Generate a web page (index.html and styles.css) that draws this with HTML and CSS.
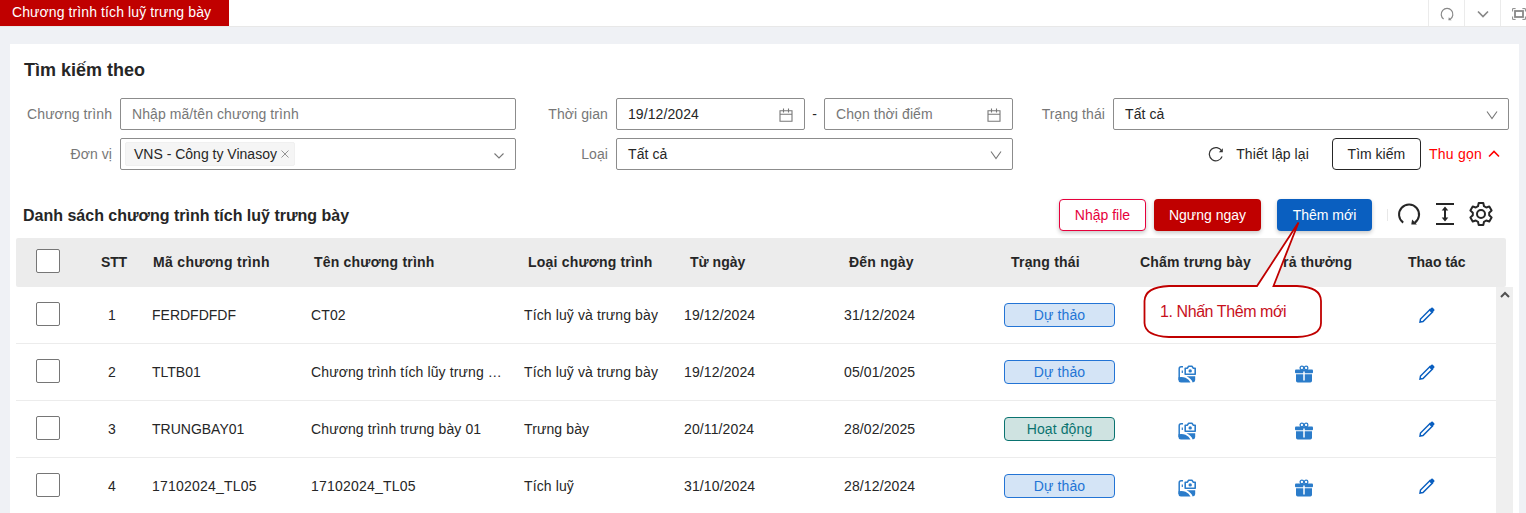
FILE: index.html
```html
<!DOCTYPE html>
<html lang="vi">
<head>
<meta charset="utf-8">
<title>Chương trình tích luỹ trưng bày</title>
<link rel="stylesheet" href="styles.css">
</head>
<body>
<svg class="defs" width="0" height="0">
  <symbol id="chev" viewBox="0 0 12 12"><path d="M1 2.500 6 9.500 11 2.500" fill="none" stroke="currentColor" stroke-width="1.100"/></symbol>
  <symbol id="cal" viewBox="0 0 14 14"><path d="M1 2.700h12v10.500H1zM1 6.200h12M4.500.5v4M9.500.5v4" fill="none" stroke="currentColor" stroke-width="1.100"/></symbol>
  <symbol id="loop" viewBox="0 0 24 24"><path d="M6.200 20.600A10 10 0 1 1 17.600 20.800" fill="none" stroke="currentColor" stroke-width="2"/><path d="M14.300 22.600l.8-5 4.800 5z" fill="currentColor"/></symbol>
  <symbol id="photo" viewBox="0 0 18 18"><path d="M5 1.800H3.200Q1.200 1.800 1.200 3.800V15" fill="none" stroke="currentColor" stroke-width="1.500"/><path d="M.5 12.300Q4.500 11.500 7.500 12.800q3.500 1.500 5 4.700H3q-2.500 0-2.500-2.500z" fill="currentColor"/><path d="M8.500 11.300h8.700v3.700q0 2.300-2.500 2.500-1.500-4-6.200-6.200z" fill="currentColor"/><path d="M7.200 3.200h2.200l1.100-1.900h3.600l1.100 1.900h2v6.100h-10z" fill="#fff" stroke="currentColor" stroke-width="1.600" stroke-linejoin="round"/><circle cx="12.200" cy="5.900" r="1.700" fill="currentColor"/><path d="M4.300 5.500V8" stroke="currentColor" stroke-width="1.200"/></symbol>
  <symbol id="gift" viewBox="0 0 18 18"><circle cx="6.900" cy="3" r="1.800" fill="none" stroke="currentColor" stroke-width="1.300"/><circle cx="11.100" cy="3" r="1.800" fill="none" stroke="currentColor" stroke-width="1.300"/><rect y="4.600" width="18" height="3.700" rx="1" fill="currentColor"/><path d="M1 9.300h16v6.400q0 1.700-1.700 1.700H2.700Q1 17.400 1 15.700z" fill="currentColor"/><path d="M9 6.500v9" stroke="#fff" stroke-width="1.500"/></symbol>
  <symbol id="pen" viewBox="0 0 16 16"><path d="M1 15l.5-3L11 2.500l2.500 2.500L4 14.500z" fill="none" stroke="currentColor" stroke-width="1.500"/><path d="M10 3.300l2.300-2.500q.8-.6 1.500 0l1.400 1.400q.7.800 0 1.600L12.700 6z" fill="currentColor"/></symbol>
</svg>

<header class="topbar">
  <div class="tab">Chương trình tích luỹ trưng bày</div>
  <div class="tools">
    <span><svg width="14" height="14"><use href="#loop"/></svg></span>
    <span><svg width="12" height="12" viewBox="0 0 12 12"><path d="M1 3.500 6 8.500l5-5" fill="none" stroke="currentColor" stroke-width="1.700"/></svg></span>
    <span><svg width="14" height="12" viewBox="0 0 14 12"><path d="M.6 3.500V.6h3M10.400.6h3v2.900M13.400 8.500v2.900h-3M3.600 11.400h-3V8.500" fill="none" stroke="currentColor"/><rect x="3" y="3" width="8" height="6" fill="none" stroke="currentColor" stroke-width="1.800"/></svg></span>
  </div>
</header>

<main class="card">
  <h1 class="title">Tìm kiếm theo</h1>
  <form class="filters">
    <label>Chương trình</label>
    <div class="field muted">Nhập mã/tên chương trình</div>
    <label>Thời gian</label>
    <div class="range">
      <div class="field">19/12/2024<svg class="cal" width="14" height="14"><use href="#cal"/></svg></div>
      <span class="dash">-</span>
      <div class="field muted">Chọn thời điểm<svg class="cal" width="14" height="14"><use href="#cal"/></svg></div>
    </div>
    <label>Trạng thái</label>
    <div class="field">Tất cả<svg class="chev" width="12" height="12"><use href="#chev"/></svg></div>
    <label>Đơn vị</label>
    <div class="field tags"><span class="tag">VNS - Công ty Vinasoy<svg width="8" height="8" viewBox="0 0 8 8"><path d="M.5.5l7 7m0-7l-7 7" stroke="#888" stroke-width=".9"/></svg></span><svg class="chev" width="12" height="12" viewBox="0 0 12 12"><path d="M1.500 4.500 6 9 10.500 4.500" fill="none" stroke="currentColor" stroke-width="1.100"/></svg></div>
    <label>Loại</label>
    <div class="field">Tất cả<svg class="chev" width="12" height="12"><use href="#chev"/></svg></div>
    <div class="actions">
      <span class="reset"><svg width="16" height="16" viewBox="0 0 16 16"><path d="M14.100 10.500A6.600 6.600 0 1 1 13.700 5" fill="none" stroke="#333" stroke-width="1.200"/><path d="M14.800 2.300v4h-4z" fill="#333"/></svg>Thiết lập lại</span>
      <span class="search">Tìm kiếm</span>
      <span class="collapse">Thu gọn<svg width="12" height="12" viewBox="0 0 12 12"><path d="M1 8.500l5-5 5 5" fill="none" stroke="red" stroke-width="1.600"/></svg></span>
    </div>
  </form>

  <section class="list">
    <div class="listbar">
      <h2>Danh sách chương trình tích luỹ trưng bày</h2>
      <span class="btn import">Nhập file</span>
      <span class="btn stop">Ngưng ngay</span>
      <span class="btn add">Thêm mới</span>
      <i class="sep"></i>
      <svg class="ico" width="24" height="24"><use href="#loop"/></svg>
      <svg class="ico" width="20" height="24" viewBox="0 0 20 24"><path d="M1 2h18M1 22h18M10 6v12" fill="none" stroke="currentColor" stroke-width="2"/><path d="M10 4.500l3.300 4H6.700zM10 19.500l3.300-4H6.700z" fill="currentColor"/></svg>
      <svg class="ico" width="24" height="24" viewBox="0 0 24 24"><path d="M9.700 1h4.600l.7 3.200 2.200 1.300 3.100-1 2.300 4-2.400 2.200v2.600l2.400 2.200-2.300 4-3.100-1-2.200 1.300-.7 3.200H9.700L9 19.800l-2.200-1.300-3.100 1-2.300-4 2.400-2.200v-2.600L1.400 8.500l2.300-4 3.100 1L9 4.200z" fill="none" stroke="currentColor" stroke-width="2" stroke-linejoin="round"/><circle cx="12" cy="12" r="4" fill="none" stroke="currentColor" stroke-width="2"/></svg>
    </div>

    <div class="thead">
      <span><i class="box"></i></span><span>STT</span><span class="wide">Mã chương trình</span><span>Tên chương trình</span><span>Loại chương trình</span><span>Từ ngày</span><span>Đến ngày</span><span>Trạng thái</span><span>Chấm trưng bày</span><span>Trả thưởng</span><span>Thao tác</span>
    </div>
    <div class="tbody">
      <div class="rows">
        <div class="row"><span><i class="box"></i></span><span>1</span><span>FERDFDFDF</span><span>CT02</span><span>Tích luỹ và trưng bày</span><span>19/12/2024</span><span>31/12/2024</span><span><b class="badge draft">Dự thảo</b></span><span></span><span></span><span><svg class="pen" width="16" height="16"><use href="#pen"/></svg></span></div>
        <div class="row"><span><i class="box"></i></span><span>2</span><span>TLTB01</span><span>Chương trình tích lũy trưng …</span><span>Tích luỹ và trưng bày</span><span>19/12/2024</span><span>05/01/2025</span><span><b class="badge draft">Dự thảo</b></span><span><svg class="pic" width="18" height="18"><use href="#photo"/></svg></span><span><svg class="pic" width="18" height="18"><use href="#gift"/></svg></span><span><svg class="pen" width="16" height="16"><use href="#pen"/></svg></span></div>
        <div class="row"><span><i class="box"></i></span><span>3</span><span>TRUNGBAY01</span><span>Chương trình trưng bày 01</span><span>Trưng bày</span><span>20/11/2024</span><span>28/02/2025</span><span><b class="badge active">Hoạt động</b></span><span><svg class="pic" width="18" height="18"><use href="#photo"/></svg></span><span><svg class="pic" width="18" height="18"><use href="#gift"/></svg></span><span><svg class="pen" width="16" height="16"><use href="#pen"/></svg></span></div>
        <div class="row"><span><i class="box"></i></span><span>4</span><span class="code">17102024_TL05</span><span class="code">17102024_TL05</span><span>Tích luỹ</span><span>31/10/2024</span><span>28/12/2024</span><span><b class="badge draft">Dự thảo</b></span><span><svg class="pic" width="18" height="18"><use href="#photo"/></svg></span><span><svg class="pic" width="18" height="18"><use href="#gift"/></svg></span><span><svg class="pen" width="16" height="16"><use href="#pen"/></svg></span></div>
      </div>
      <div class="scroll"><svg width="10" height="8" viewBox="0 0 10 8"><path d="M1 6l4-4 4 4" fill="none" stroke="#505050" stroke-width="2"/></svg></div>
    </div>
  </section>
</main>

<div class="callout">
  <svg width="190" height="124" viewBox="0 0 190 124"><path d="M29 66H117L158.500 2.500 133.500 66H157Q181 67 181 81V103Q181 116 157 117H29Q5 116 4.500 103V81Q5 67 29 66Z" fill="#fff" stroke="#c00000" stroke-width="1.800"/></svg>
  <span>1. Nhấn Thêm mới</span>
</div>
</body>
</html>
```
FILE: styles.css
```css
* { box-sizing: border-box; }
body { margin: 0; height: 513px; overflow: hidden; background: #eff1f5; font: 14px/20px "Liberation Sans", Arial, sans-serif; color: #262626; }
svg { display: block; flex: none; }
.defs { position: absolute; }
.topbar { display: flex; justify-content: space-between; height: 27px; background: #fff; border-bottom: 1px solid #e8e8e8; }
.tab { width: 229px; height: 26px; padding-left: 12px; line-height: 25px; background: #c00000; color: #fff; white-space: nowrap; letter-spacing: .1px; }
.tools { display: flex; width: 98px; overflow: hidden; color: #888; }
.tools span { flex: 0 0 36px; height: 26px; padding-top: 1px; border-left: 1px solid #ebebeb; display: flex; align-items: center; justify-content: center; }

.card { margin: 17px 7px 0 10px; height: 469px; background: #fff; overflow: hidden; }
.title { margin: 0; padding: 14px 0 0 14px; font-size: 18px; line-height: 24px; }
.filters { display: grid; grid-template-columns: 110px 396px 100px 397px 100px 396px; grid-auto-rows: 32px; row-gap: 8px; margin-top: 16px; line-height: 32px; }
.filters label { text-align: right; padding-right: 8px; color: #777; letter-spacing: .08px; }
.field { display: flex; align-items: center; justify-content: space-between; height: 32px; padding: 0 11px; border: 1px solid #8c8c8c; border-radius: 2px; color: #262626; white-space: nowrap; line-height: 30px; letter-spacing: .08px; }
.field .chev { margin-right: -1px; }
.muted { color: #777; }
.range { display: grid; grid-template-columns: 189px 19px 189px; }
.dash { text-align: center; }
.cal { color: #777; margin-top: 2px; }
.chev { color: #777; margin-top: 1px; }
.field.tags { padding-left: 4px; letter-spacing: 0; }
.tag { display: flex; align-items: center; gap: 4px; height: 24px; padding: 0 5px 0 8px; background: #f5f5f5; border: 1px solid #f0f0f0; border-radius: 2px; line-height: 22px; }
.actions { grid-column: 5 / 7; display: flex; justify-content: flex-end; padding-right: 9px; }
.reset { display: flex; align-items: center; gap: 12px; margin-right: 23px; letter-spacing: .08px; }
.search { width: 89px; border: 1px solid #262626; border-radius: 4px; text-align: center; line-height: 30px; margin-right: 8px; }
.collapse { display: flex; align-items: center; gap: 6px; color: red; letter-spacing: .25px; }

.list { padding: 27px 6px 0; }
.listbar { display: flex; align-items: center; height: 41px; padding: 0 20px 5px 7px; }
.listbar h2 { margin: 2px auto 0 0; font-size: 16px; line-height: 20px; }
.btn { height: 32px; line-height: 32px; text-align: center; border-radius: 4px; color: #fff; box-shadow: 0 2px 4px rgba(0,0,0,.22); }
.import { width: 87px; line-height: 30px; border: 1px solid #e6003c; color: #e6003c; background: #fff; }
.stop { width: 107px; margin-left: 8px; background: #c00000; }
.add { width: 95px; margin-left: 16px; background: #0a5fc0; }
.sep { width: 1px; height: 12px; margin: 0 9px 0 15px; background: #e8e8e8; }
.ico + .ico { margin-left: 14px; }
.ico { margin-top: -2px; color: #262626; }
.thead, .row { display: grid; align-items: center; white-space: nowrap; letter-spacing: .12px; }
.thead { width: 1490px; height: 49px; padding: 0 0 2px 20px; background: #ececec; font-weight: 700; grid-template-columns: 65px 52px 161px 214px 162px 159px 162px 129px 133px 135px 90px; border-radius: 2px; letter-spacing: .2px; }
.thead span:nth-child(2) { letter-spacing: -.2px; }
.thead .wide { letter-spacing: .33px; }
.thead span:nth-child(10) { padding-left: 2px; }
.thead span:nth-child(6), .thead span:nth-child(11) { letter-spacing: 0; }
.tbody { display: flex; height: 240px; }
.rows { width: 1480px; }
.row { height: 57px; padding-left: 20px; border-bottom: 1px solid #ececec; grid-template-columns: 72px 44px 159px 213px 160px 160px 160px 174px 117px 124px 80px; }
.row > span:nth-child(3) { letter-spacing: 0; }
.row > .code, .row > .code:nth-child(3) { letter-spacing: .22px; }
.box { display: block; width: 24px; height: 24px; border: 1px solid #767676; border-radius: 2px; background: #fff; margin-top: -2px; }
.badge { display: block; width: 111px; height: 24px; line-height: 22px; border: 1px solid; border-radius: 4px; text-align: center; font-weight: 400; }
.draft { color: #2374d5; background: #d4e4f6; }
.active { color: #0a7370; background: #cfe3e1; }
.pic { color: #2b7cca; margin-top: 3px; }
.pen { color: #0a5fc0; }
.scroll { width: 17px; background: #efefef; padding: 4px 0 0 4px; }

.callout { position: absolute; left: 1140px; top: 220px; }
.callout span { position: absolute; left: 20px; top: 82px; font-size: 16px; letter-spacing: -.42px; color: #c8101c; white-space: nowrap; }
```
